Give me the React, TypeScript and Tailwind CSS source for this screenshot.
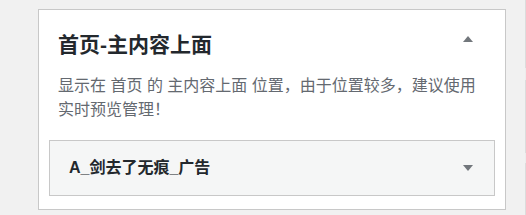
import React from "react";

const font = { fontFamily: '"Liberation Sans", "Noto Sans CJK SC", sans-serif' };

const Caret = ({ up }: { up?: boolean }) => (
  <svg width="10" height="6" viewBox="0 0 10 6" className="shrink-0">
    <polygon points={up ? "5,0 10,6 0,6" : "0,0 10,0 5,6"} fill="#72777c" />
  </svg>
);

export default function App() {
  return (
    <div className="flex h-[215px] w-[526px] bg-[#f1f1f1]" style={font}>
      <div className="flex-1 pl-[38px] pt-[9px]">
        <div className="flex h-[201px] w-[468px] flex-col border border-[#c8c8c8] bg-white">
          <div className="flex items-start justify-between pl-[19px] pr-[32px] pt-[21px]">
            <h3 className="text-[21px] font-bold leading-[28px] text-[#23282d]">首页-主内容上面</h3>
            <div className="mt-[5px]">
              <Caret up />
            </div>
          </div>
          <p className="mt-[15px] pl-[19px] pr-[24px] text-[16px] leading-[24px] text-[#646970]">
            显示在 首页 的 主内容上面 位置，由于位置较多，建议使用实时预览管理！
          </p>
          <div className="mx-[10px] mt-[18px] flex h-[56px] items-center justify-between border border-[#c8c8c8] bg-[#f5f6f6] pl-[19px] pr-[21px]">
            <span className="text-[16px] font-bold text-[#23282d]">A_剑去了无痕_广告</span>
            <Caret />
          </div>
        </div>
      </div>
      <div className="flex w-px flex-col">
        <div className="h-[68px] bg-[#dcdcdc]" />
        <div className="h-[12px] bg-[#ececec]" />
        <div className="h-[73px] bg-[#dcdcdc]" />
        <div className="h-[10px] bg-[#ececec]" />
        <div className="flex-1 bg-[#dcdcdc]" />
      </div>
    </div>
  );
}
